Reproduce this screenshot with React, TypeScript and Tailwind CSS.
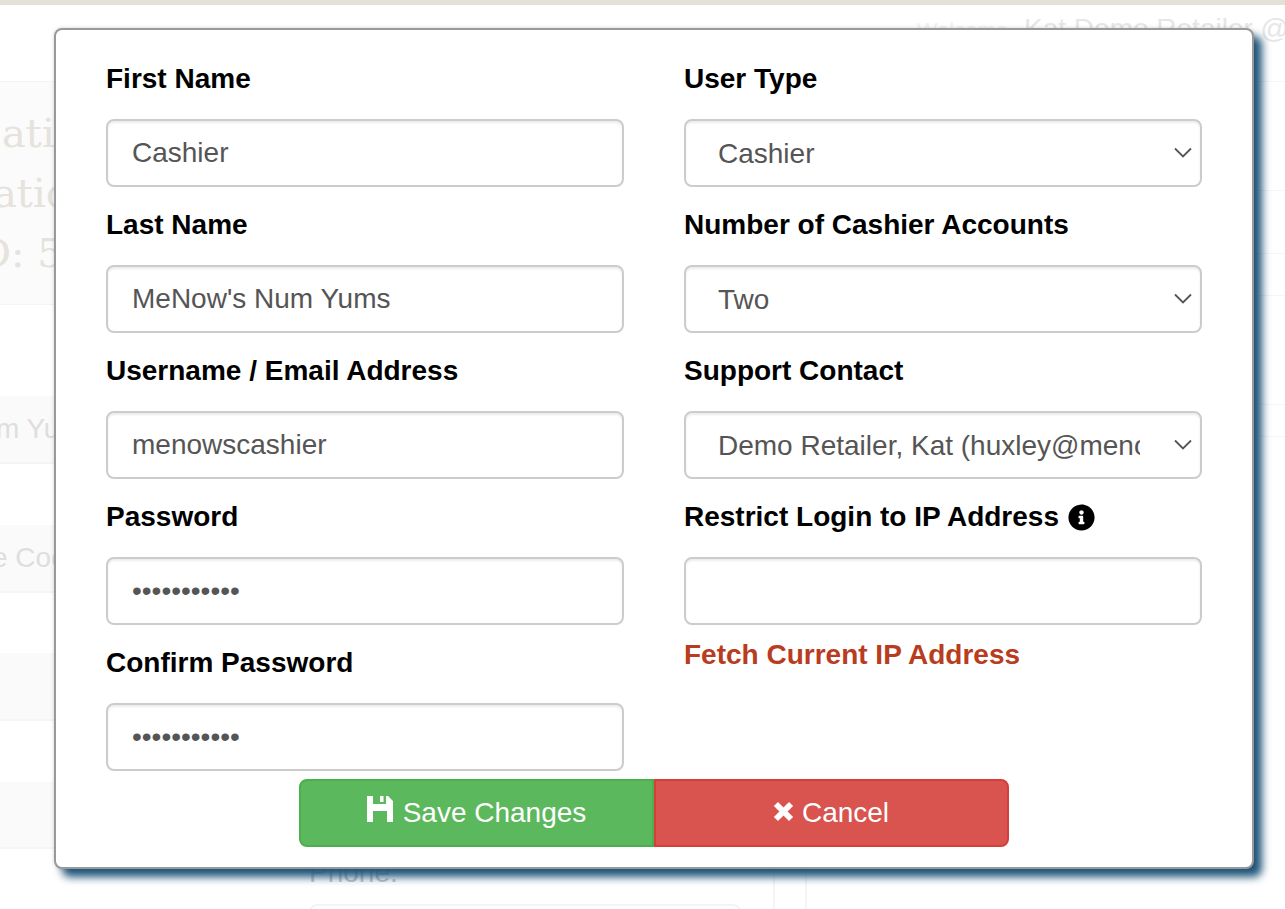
import { FaInfoCircle } from "react-icons/fa";

const inputClass =
  "h-[68px] w-full rounded-lg border-2 border-[#ccc] bg-white px-6 text-[28px] text-[#555] shadow-[inset_0_2px_2px_rgba(0,0,0,0.075)] outline-none";

function Label({ children }: { children: React.ReactNode }) {
  return <label className="mb-[21px] flex h-[38px] items-center gap-[9px] text-[28px] font-bold text-black">{children}</label>;
}

function TextField({ label, value, type = "text" }: { label: React.ReactNode; value: string; type?: string }) {
  return (
    <div>
      <Label>{label}</Label>
      <input type={type} defaultValue={value} className={inputClass} />
    </div>
  );
}

function SelectField({ label, value }: { label: string; value: string }) {
  return (
    <div>
      <Label>{label}</Label>
      <div className="relative">
        <select defaultValue={value} className={`${inputClass} appearance-none pt-0.5 pl-8 pr-[60px]`}>
          <option>{value}</option>
        </select>
        <svg viewBox="0 0 18 11" className="pointer-events-none absolute right-[10px] top-[28px] h-[11px] w-[18px] fill-none stroke-[#555] stroke-[1.8]">
          <path d="M1 1.5l8 8 8-8" />
        </svg>
      </div>
    </div>
  );
}

function SaveIcon() {
  return (
    <svg viewBox="0 0 26 26" className="mb-2 size-[26px] fill-white">
      <path d="M0 0H6V8H19V0H21L26 5V26H20V15H6V26H0Z" />
      <rect x="13" y="0" width="3.5" height="6" />
    </svg>
  );
}

function CancelIcon() {
  return (
    <svg viewBox="0 0 20 20" className="mb-[3px] -ml-px size-[21px] fill-none stroke-white stroke-[5.5]">
      <path d="M2.8 2.8l14.4 14.4M17.2 2.8l-14.4 14.4" />
    </svg>
  );
}

function BackdropPage() {
  return (
    <div className="h-[909px] overflow-hidden bg-white font-['Liberation_Sans',sans-serif]">
      <div className="h-[5px] bg-[#e5e1d9]" />
      <div className="flex h-[76px] items-baseline justify-end gap-[16px] pt-[10px] text-[28px] leading-[28px] whitespace-nowrap text-[#e6e6e6]">
        <span className="text-[22px] text-[#f1f1f1]">Welcome</span>
        <span className="-mr-[4px]">Kat Demo Retailer @</span>
      </div>

      <div className="flex">
        <div className="w-[54px] shrink-0 overflow-hidden">
          <div className="flex h-[224px] flex-col gap-[19px] border-y border-[#f4f4f4] bg-[#fbfbfb] pt-[31px] font-['DejaVu_Serif',serif] text-[40px] leading-[41px] whitespace-nowrap text-[#e6e2dc]">
            <div className="ml-[2px]">ati</div>
            <div className="-ml-[7px]">atio</div>
            <div className="-ml-[21px]">D: 5</div>
          </div>
          <div className="mt-[91px] flex h-[68px] items-center border-b-2 border-[#f5f5f5] bg-[#fafafa] text-[28px] whitespace-nowrap text-[#dedede]">
            <span className="-ml-[4px]">m Yu</span>
          </div>
          <div className="mt-[61px] flex h-[68px] items-center border-b-2 border-[#f5f5f5] bg-[#fafafa] text-[28px] whitespace-nowrap text-[#dedede]">
            <span className="-ml-[8px]">e Coc</span>
          </div>
          <div className="mt-[60px] h-[68px] border-b-2 border-[#f5f5f5] bg-[#fafafa]" />
          <div className="mt-[61px] h-[67px] border-b-2 border-[#f5f5f5] bg-[#fafafa]" />
        </div>

        <div className="w-[255px] shrink-0" />

        <div className="flex w-[464px] shrink-0 flex-col pt-[780px]">
          <span className="text-[28px] leading-[24px] text-[#c4c8cc]">Phone:</span>
          <div className="mt-[19px] h-[20px] w-[432px] rounded-t-lg border-2 border-[#f3f3f3] bg-white" />
        </div>
        <div className="h-[909px] w-[34px] shrink-0 border-x-2 border-[#f5f5f5]" />

        <div className="ml-auto w-[31px] shrink-0">
          <div className="h-[110px] border-y border-[#f5f5f5]" />
          <div className="mt-[62px] h-[43px] border-y border-[#f5f5f5]" />
          <div className="mt-[108px] h-[33px] border-y border-[#f5f5f5]" />
        </div>
      </div>
    </div>
  );
}

export default function App() {
  return (
    <div className="relative font-['Liberation_Sans',sans-serif]">
      <BackdropPage />

      <div className="absolute top-7 left-[54px] h-[841px] w-[1200px] rounded-lg border-2 border-[#999] bg-white px-[50px] pt-[30px] shadow-[8px_8px_8px_#1f5478,0_0_4px_rgba(0,0,0,0.15)]">
        <div className="grid grid-cols-2 gap-x-[60px]">
          <div className="flex flex-col gap-[19px]">
            <TextField label="First Name" value="Cashier" />
            <TextField label="Last Name" value="MeNow's Num Yums" />
            <TextField label="Username / Email Address" value="menowscashier" />
            <TextField label="Password" value="12345678901" type="password" />
            <TextField label="Confirm Password" value="12345678901" type="password" />
          </div>
          <div className="flex flex-col gap-[19px]">
            <SelectField label="User Type" value="Cashier" />
            <SelectField label="Number of Cashier Accounts" value="Two" />
            <SelectField label="Support Contact" value="Demo Retailer, Kat (huxley@menowsnumyums.com)" />
            <div>
              <TextField
                label={
                  <>
                    Restrict Login to IP Address
                    <FaInfoCircle className="size-[27px]" />
                  </>
                }
                value=""
              />
              <div className="mt-[11px] text-[28px] leading-[38px] font-bold text-[#b83c20]">Fetch Current IP Address</div>
            </div>
          </div>
        </div>

        <div className="mt-[8px] flex justify-center">
          <button
            type="button"
            className="flex h-[68px] w-[355px] items-center justify-center gap-[10px] rounded-l-lg border-2 border-[#4cae4c] bg-[#5cb85c] text-[28px] text-white"
          >
            <SaveIcon />
            Save Changes
          </button>
          <button
            type="button"
            className="flex h-[68px] w-[355px] items-center justify-center gap-2 rounded-r-lg border-2 border-[#d43f3a] bg-[#d9534f] text-[28px] text-white"
          >
            <CancelIcon />
            Cancel
          </button>
        </div>
      </div>
    </div>
  );
}
